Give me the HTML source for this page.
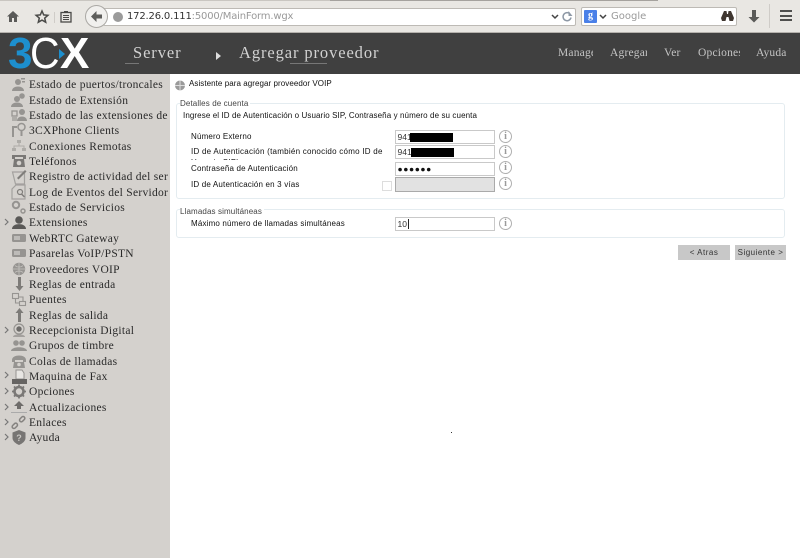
<!DOCTYPE html>
<html lang="es"><head><meta charset="utf-8"><title>3CX</title>
<style>
html,body{margin:0;padding:0;width:800px;height:558px;overflow:hidden;background:#fff;font-family:"Liberation Sans",sans-serif}
div,span{position:absolute;white-space:nowrap}
svg{position:absolute;overflow:visible}
#w{left:0;top:0;width:800px;height:558px;overflow:hidden;background:#fff;filter:blur(.3px)}
#tb{left:0;top:0;width:800px;height:33px;background:#e9e7e3}
#hd{left:0;top:32px;width:800px;height:42px;background:#404040;border-top:1px solid #b5b2ad;box-sizing:border-box}
#sb{left:0;top:74px;width:170px;height:484px;background:#d4d1cd}
.lg{top:32px;font:44px/44px "Liberation Sans",sans-serif;color:#fff}
.h{font:16.5px "Liberation Serif",serif;color:#d2d2d2;letter-spacing:.9px;line-height:18px}
.m{font:11.5px "Liberation Serif",serif;color:#c4c4c4;top:47px;line-height:13px;overflow:hidden;letter-spacing:.2px}
.n{left:29px;width:139px;margin-top:1px;overflow:hidden;font:11.5px/14px "Liberation Serif",serif;color:#2a2a2a;letter-spacing:.28px}
.l{font:8px/10px "Liberation Sans",sans-serif;color:#111;letter-spacing:.17px}
.f{left:395px;width:98px;height:12px;background:#fff;border:1px solid #c9c9c9;font:8.5px/13px "Liberation Sans",sans-serif;color:#333;text-indent:1.5px}
.r{background:#000;height:9px}
.i{width:11px;height:11px;border:1px solid #b0b0b0;border-radius:50%;left:499px;font:bold 10px/11px "Liberation Serif",serif;color:#9a9a9a;text-align:center}
.g{left:176px;width:609px;box-sizing:border-box;border:1px solid #e4ecf0;border-radius:3px;background:#fff}
.b{top:245px;height:15px;background:#c8c8c8;font:8px/15px "Liberation Sans",sans-serif;color:#333;text-align:center;letter-spacing:.5px}
</style></head><body><div id="w">
<div id="tb"></div>
<div style="left:0;top:0;width:330px;height:1px;background:#c9c6c1"></div>
<div style="left:330px;top:0;width:328px;height:1px;background:#a5a29e"></div>

<svg style="left:6px;top:9px" width="14" height="14" viewBox="0 0 14 14"><path d="M7 2 1 7.500h2V13h3V9h2v4h3V7.500h2z" fill="#5a5a58"/></svg>
<svg style="left:35px;top:10px" width="14" height="13" viewBox="0 0 14 13"><path d="M7 1l1.700 3.900 4.200.4-3.200 2.800 1 4.100L7 10.100 3.300 12.200l1-4.100L1.100 5.300l4.200-.4z" fill="none" stroke="#4a4a48" stroke-width="1.500"/></svg>
<div style="left:54px;top:12px;width:1px;height:11px;background:#cfccc8"></div>
<svg style="left:60px;top:10px" width="12" height="13" viewBox="0 0 12 13"><rect x="1" y="2.500" width="10" height="9.500" fill="none" stroke="#4a4a48" stroke-width="1.300"/><path d="M3 5.500h6M3 7.500h6M3 9.500h6" stroke="#4a4a48"/><rect x="4" y="1" width="4" height="2" fill="#4a4a48"/></svg>

<div style="left:103px;top:8px;width:471px;height:16px;background:#fff;border:1px solid #bdbab5;border-radius:2px"></div>
<div style="left:85px;top:5px;width:21px;height:21px;background:#f1f0ee;border:1px solid #aaa8a4;border-radius:50%"></div>
<svg style="left:90px;top:10px" width="13" height="13" viewBox="0 0 13 13"><path d="M6.500 1 1 6.500 6.500 12V8.500H12v-4H6.500z" fill="#5d5d5b"/></svg>
<div style="left:113px;top:12px;width:10px;height:10px;border-radius:50%;background:#9b9b9b"></div>
<div style="left:127px;top:10px;font:10px/14px 'DejaVu Sans',sans-serif;color:#333;letter-spacing:-.18px">172.26.0.111<span style="position:static;color:#999">:5000/MainForm.wgx</span></div>
<svg style="left:551px;top:14px" width="8" height="6" viewBox="0 0 8 6"><path d="M1 1l3 3 3-3" fill="none" stroke="#444" stroke-width="1.500"/></svg>
<svg style="left:562px;top:11px" width="11" height="11" viewBox="0 0 11 11"><path d="M9 6.500A4 4 0 1 1 7.500 2.500" fill="none" stroke="#8d98a5" stroke-width="1.500"/><path d="M6.500 0v5h4z" fill="#8d98a5"/></svg>

<div style="left:581px;top:7px;width:154px;height:17px;background:#fff;border:1px solid #bdbab5;border-radius:2px"></div>
<div style="left:584px;top:10px;width:13px;height:13px;background:#4a80e8;border-radius:1px;color:#fff;font:bold 10px/12px 'Liberation Serif',serif;text-align:center">g</div>
<svg style="left:599px;top:14px" width="8" height="6" viewBox="0 0 8 6"><path d="M1 1l3 3 3-3" fill="none" stroke="#444" stroke-width="1.500"/></svg>
<div style="left:611px;top:10px;font:10px/14px 'DejaVu Sans',sans-serif;color:#9a9a9a">Google</div>
<svg style="left:721px;top:11px" width="13" height="10" viewBox="0 0 13 10"><path d="M3 0h2.500l.5 3h1l.5-3H10l3 7-1 3H8.500L7.500 6h-2l-1 4H1L0 7z" fill="#3f3630"/></svg>
<svg style="left:748px;top:10px" width="12" height="13" viewBox="0 0 12 13"><path d="M4 0h4v7h3.500L6 12.500.5 7H4z" fill="#5a5a58"/></svg>
<div style="left:769px;top:4px;width:1px;height:24px;background:#cfccc8"></div>
<div style="left:780px;top:10px;width:12px;height:2px;background:#4f4f4d"></div>
<div style="left:780px;top:15px;width:12px;height:2px;background:#4f4f4d"></div>
<div style="left:780px;top:19px;width:12px;height:2px;background:#4f4f4d"></div>

<div id="hd"></div>
<div class="lg" style="left:8px;font-weight:bold;color:#1d8fce">3</div>
<div class="lg" style="left:30px;transform:scaleX(.93);transform-origin:left">C</div>
<div class="lg" style="left:60px;font-weight:bold">X</div>
<svg style="left:59px;top:49px" width="6" height="10" viewBox="0 0 6 10"><path d="M0 0l6 5-6 5z" fill="#1d8fce"/></svg>
<div class="h" style="left:133px;top:44px">Server</div>
<svg style="left:216px;top:52px" width="6" height="8" viewBox="0 0 6 8"><path d="M0 0l5 4-5 4z" fill="#ddd"/></svg>
<div class="h" style="left:239px;top:44px">Agregar proveedor</div>
<div style="left:125px;top:63px;width:14px;height:1px;background:#777"></div>
<div style="left:290px;top:63px;width:37px;height:1px;background:#777"></div>
<div class="m" style="left:558px;width:35px">Manage</div>
<div class="m" style="left:610px;width:37px">Agregar</div>
<div class="m" style="left:664px">Ver</div>
<div class="m" style="left:698px;width:42px">Opciones</div>
<div class="m" style="left:756px">Ayuda</div>

<div id="sb"></div>
<div class="n" style="top:77px">Estado de puertos/troncales</div>
<div class="n" style="top:93px">Estado de Extensión</div>
<div class="n" style="top:108px">Estado de las extensiones del</div>
<div class="n" style="top:123px">3CXPhone Clients</div>
<div class="n" style="top:139px">Conexiones Remotas</div>
<div class="n" style="top:154px">Teléfonos</div>
<div class="n" style="top:169px">Registro de actividad del ser</div>
<div class="n" style="top:185px">Log de Eventos del Servidor</div>
<div class="n" style="top:200px">Estado de Servicios</div>
<div class="n" style="top:215px">Extensiones</div>
<div class="n" style="top:231px">WebRTC Gateway</div>
<div class="n" style="top:246px">Pasarelas VoIP/PSTN</div>
<div class="n" style="top:262px">Proveedores VOIP</div>
<div class="n" style="top:277px">Reglas de entrada</div>
<div class="n" style="top:292px">Puentes</div>
<div class="n" style="top:308px">Reglas de salida</div>
<div class="n" style="top:323px">Recepcionista Digital</div>
<div class="n" style="top:338px">Grupos de timbre</div>
<div class="n" style="top:354px">Colas de llamadas</div>
<div class="n" style="top:369px">Maquina de Fax</div>
<div class="n" style="top:384px">Opciones</div>
<div class="n" style="top:400px">Actualizaciones</div>
<div class="n" style="top:415px">Enlaces</div>
<div class="n" style="top:430px">Ayuda</div>

<svg style="left:0;top:0" width="30" height="450" viewBox="0 0 30 450" fill="#969491">
<path d="M5 219l3 3-3 3M5 327l3 3-3 3M5 372l3 3-3 3M5 388l3 3-3 3M5 404l3 3-3 3M5 419l3 3-3 3M5 434l3 3-3 3" fill="none" stroke="#777" stroke-width="1.200"/>
<g transform="translate(11,77)"><circle cx="7" cy="5" r="3"/><path d="M1 14c0-6 12-6 12 0z"/><path d="M10 1h4v1.500h-4zM11 4h3v1.500h-3z"/></g>
<g transform="translate(11,92)"><circle cx="6" cy="7" r="3"/><path d="M0 15c0-6 12-6 12 0z"/><circle cx="11" cy="4" r="2.800"/></g>
<g transform="translate(11,107)"><rect x="1" y="4" width="5" height="5" fill="none" stroke="#969491" stroke-width="1.300"/><rect x="1" y="10" width="5" height="4" opacity=".6"/><circle cx="11" cy="5" r="3"/><path d="M6 14c0-6 10-6 10 0z"/></g>
<g transform="translate(11,122)"><path d="M1 4h5v2H3v9H1z"/><circle cx="10.500" cy="5" r="3.500" fill="none" stroke="#969491" stroke-width="1.500"/><path d="M9.500 9h2v5h-2z"/></g>
<g transform="translate(11,138)" opacity=".6"><path d="M6 2h4v3H6zM1 10h4v3H1zM11 10h4v3h-4z"/><path d="M8 5v3M3 10V8h10v2" fill="none" stroke="#969491"/></g>
<g transform="translate(11,153)" fill="#7a7876"><path d="M1 2h14v4h-3V4H4v2H1z"/><path d="M3 6h10l1 8H2z"/><circle cx="8" cy="10" r="2.300" fill="#d4d1cd"/></g>
<g transform="translate(11,169)"><path d="M1.500 3h12v12h-9z" fill="none" stroke="#a3a19e" stroke-width="1.200"/><path d="M6 9l8-8 1.500 1.500-8 8z" fill="#807e7b"/></g>
<g transform="translate(11,184)"><path d="M5 1h9v14H1V5z" fill="none" stroke="#a3a19e" stroke-width="1.200"/><circle cx="9" cy="8" r="2.500" fill="none" stroke="#807e7b" stroke-width="1.200"/><path d="M10.500 10l3 3" stroke="#807e7b" stroke-width="1.500"/></g>
<g transform="translate(11,200)"><circle cx="5" cy="5" r="3.200" fill="none" stroke="#969491" stroke-width="2"/><circle cx="12" cy="11" r="2" fill="none" stroke="#969491" stroke-width="1.500"/></g>
<g transform="translate(11,215)" fill="#5a5957"><circle cx="8" cy="5" r="3.800"/><path d="M1 14c0-6.500 14-6.500 14 0z"/></g>
<g transform="translate(11,231)"><rect x="1" y="3" width="14" height="8" rx="1.500"/><rect x="3" y="5" width="6" height="4" fill="#bdbbb8"/></g>
<g transform="translate(11,246)"><rect x="1" y="3" width="14" height="8" rx="1.500"/><rect x="3" y="5" width="6" height="4" fill="#bdbbb8"/></g>
<g transform="translate(11,262)"><circle cx="8" cy="7" r="6.200"/><path d="M2 7h12M8 1v12M4 3.500c2 2 6 2 8 0M4 10.500c2-2 6-2 8 0" fill="none" stroke="#c5c3bf" stroke-width=".8"/></g>
<g transform="translate(11,277)" fill="#7d7b78"><path d="M7 0h3v9h2.500L8.500 14 4.500 9H7z"/></g>
<g transform="translate(11,292)" fill="none" stroke="#969491" stroke-width="1.100"><rect x="1.500" y="1.500" width="6" height="5"/><rect x="8.500" y="9.500" width="6" height="4"/><path d="M7.500 5H12v4.500M4.500 6.500V11h4"/></g>
<g transform="translate(11,308)" fill="#7d7b78"><path d="M8.500 0l4 5H10v9H7V5H4.500z"/></g>
<g transform="translate(11,323)"><circle cx="8" cy="6" r="5" fill="none" stroke="#969491" stroke-width="1.200"/><circle cx="8" cy="6" r="2.700" fill="#6e6c6a"/><path d="M2 14c0-3.500 12-3.500 12 0z" opacity=".8"/></g>
<g transform="translate(11,338)"><circle cx="5" cy="5" r="2.800"/><circle cx="11" cy="5" r="2.800"/><path d="M0 13c0-5 16-5 16 0z"/></g>
<g transform="translate(11,354)"><path d="M1 6c0-6 14-6 14 0v2h-3V6H4v2H1z"/><path d="M3 8h10l1 6H2z"/><circle cx="8" cy="10.500" r="1.800" fill="#d4d1cd"/></g>
<g transform="translate(11,369)"><path d="M5 1h6l2 3v6H5z" fill="#e8e6e3" stroke="#969491"/><rect x="1" y="10" width="15" height="5" fill="#666462"/></g>
<g transform="translate(11,384)"><circle cx="8" cy="7.500" r="4.500" fill="none" stroke="#7a7876" stroke-width="2.600"/><path d="M8 .5v2M8 12.500v2M1 7.500h2M13 7.500h2M3 2.500l1.500 1.500M13 2.500L11.500 4M3 12.500L4.500 11M13 12.500L11.500 11" stroke="#7a7876" stroke-width="1.800"/></g>
<g transform="translate(11,400)"><path d="M8 1l5 5h-3v3H6V6H3z" fill="#6e6c6a"/><path d="M0 12.500h16" stroke="#aaa"/></g>
<g transform="translate(11,415)" fill="none" stroke="#858380" stroke-width="1.500"><rect x="1" y="9" width="6" height="3.500" rx="1.700" transform="rotate(-45 4 11)"/><rect x="8" y="2.500" width="6" height="3.500" rx="1.700" transform="rotate(-45 11 4)"/></g>
<g transform="translate(11,430)"><path d="M8 0l6.500 2.500V8c0 3-3 5.500-6.500 7-3.500-1.500-6.500-4-6.500-7V2.500z" fill="#777573"/><text x="8" y="11" text-anchor="middle" font-family="Liberation Sans" font-weight="bold" font-size="9" fill="#c9c7c3">?</text></g>
</svg>

<svg style="left:174px;top:80px" width="12" height="11" viewBox="0 0 12 11"><circle cx="6" cy="5.500" r="5" fill="#9a9a9a"/><path d="M1 5.500h10M6 .5v10" stroke="#ddd"/></svg>
<div class="l" style="left:189px;top:79px;letter-spacing:.06px">Asistente para agregar proveedor VOIP</div>

<div class="g" style="top:103px;height:96px"></div>
<div class="l" style="left:180px;top:99px;background:#fff;padding-right:2px;color:#444;letter-spacing:.12px">Detalles de cuenta</div>
<div class="l" style="left:183px;top:111px;letter-spacing:.1px">Ingrese el ID de Autenticación o Usuario SIP, Contraseña y número de su cuenta</div>
<div class="l" style="left:191px;top:132px">Número Externo</div>
<div class="l" style="left:191px;top:146px;width:200px;height:14px;overflow:hidden;white-space:normal;line-height:11px;letter-spacing:.25px">ID de Autenticación (también conocido cómo ID de Usuario SIP)</div>
<div class="l" style="left:191px;top:164px">Contraseña de Autenticación</div>
<div class="l" style="left:191px;top:180px">ID de Autenticación en 3 vías</div>

<div class="f" style="top:130px">941</div><div class="r" style="left:410px;top:133px;width:43px"></div>
<div class="f" style="top:145px">941</div><div class="r" style="left:411px;top:148px;width:43px"></div>
<div class="f" style="top:162px;letter-spacing:.6px;color:#111">●●●●●●</div>
<div style="left:382px;top:181px;width:8px;height:8px;border:1px solid #ddd;background:#fff"></div>
<div class="f" style="top:177px;background:#e2e2e2;border-color:#aaa;height:13px"></div>
<div class="i" style="top:130px">i</div><div class="i" style="top:145px">i</div><div class="i" style="top:161px">i</div><div class="i" style="top:177px">i</div>

<div class="g" style="top:209px;height:29px"></div>
<div class="l" style="left:180px;top:207px;background:#fff;padding-right:2px;color:#444;letter-spacing:.12px">Llamadas simultáneas</div>
<div class="l" style="left:191px;top:219px">Máximo número de llamadas simultáneas</div>
<div class="f" style="top:217px">10<span style="left:12px;top:1px;width:1px;height:10px;background:#222"></span></div>
<div class="i" style="top:217px">i</div>

<div class="b" style="left:678px;width:52px">&lt; Atras</div>
<div class="b" style="left:735px;width:51px">Siguiente &gt;</div>
<div style="left:451px;top:432px;width:1px;height:1px;background:#333"></div>
</div></body></html>
